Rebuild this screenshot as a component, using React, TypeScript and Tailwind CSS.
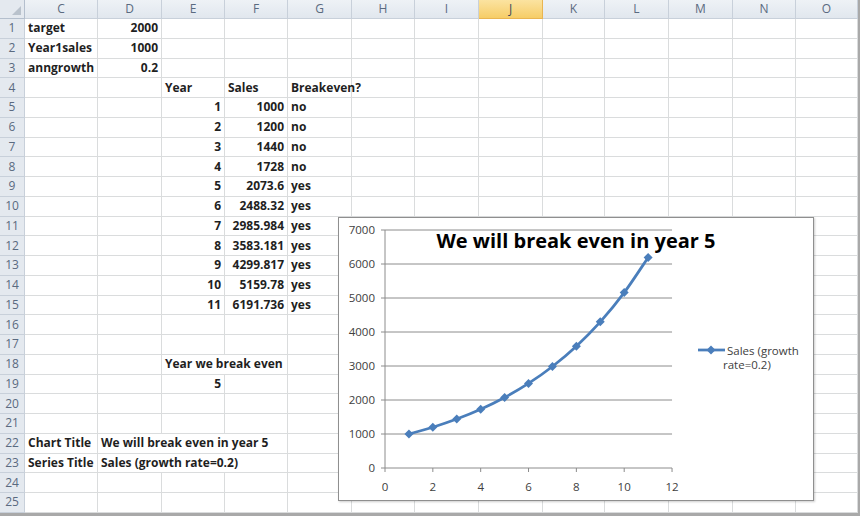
const COLS = ["C", "D", "E", "F", "G", "H", "I", "J", "K", "L", "M", "N", "O"];

type Cell = { t: string; r?: boolean; join?: boolean };

const cells: Record<string, Cell> = {
  C1: { t: "target" },
  D1: { t: "2000", r: true },
  C2: { t: "Year1sales" },
  D2: { t: "1000", r: true },
  C3: { t: "anngrowth" },
  D3: { t: "0.2", r: true },
  E4: { t: "Year" },
  F4: { t: "Sales" },
  G4: { t: "Breakeven?" },
  E18: { t: "Year we break even", join: true },
  E19: { t: "5", r: true },
  C22: { t: "Chart Title" },
  D22: { t: "We will break even in year 5", join: true },
  E22: { t: "", join: true },
  C23: { t: "Series Title" },
  D23: { t: "Sales (growth rate=0.2)", join: true },
  E23: { t: "", join: true },
};

const sales = [1000, 1200, 1440, 1728, 2073.6, 2488.32, 2985.984, 3583.181, 4299.817, 5159.78, 6191.736];
sales.forEach((v, i) => {
  const row = i + 5;
  cells["E" + row] = { t: String(i + 1), r: true };
  cells["F" + row] = { t: String(v), r: true };
  cells["G" + row] = { t: v >= 2000 ? "yes" : "no" };
});

// chart geometry (relative to inside of chart border)
const X0 = 46;
const XU = 23.92;
const Y0 = 250;
const YU = 0.034;
const pts = sales.map((v, i) => [X0 + (i + 1) * XU, Y0 - v * YU]);

function smoothPath(p: number[][]) {
  let d = `M${p[0][0]},${p[0][1]}`;
  for (let i = 0; i < p.length - 1; i++) {
    const a = p[i - 1] || p[i];
    const b = p[i];
    const c = p[i + 1];
    const e = p[i + 2] || c;
    const c1x = b[0] + (c[0] - a[0]) / 6;
    const c1y = b[1] + (c[1] - a[1]) / 6;
    const c2x = c[0] - (e[0] - b[0]) / 6;
    const c2y = c[1] - (e[1] - b[1]) / 6;
    d += ` C${c1x},${c1y} ${c2x},${c2y} ${c[0]},${c[1]}`;
  }
  return d;
}

function Diamond({ x, y }: { x: number; y: number }) {
  return <polygon points={`${x},${y - 4.5} ${x + 4.5},${y} ${x},${y + 4.5} ${x - 4.5},${y}`} fill="#4a7ebb" />;
}

function Chart() {
  const grid = [1, 2, 3, 4, 5, 6, 7];
  return (
    <div className="absolute left-[338px] top-[217px] h-[284px] w-[476px] border border-[#8f8f8f] bg-white shadow-[1px_1px_2px_rgba(0,0,0,0.2)]">
      <svg width="474" height="282" className="block" style={{ fontFamily: "'Open Sans', Lato, sans-serif" }}>
        {grid.map((k) => (
          <line key={k} x1={X0} x2={X0 + 12 * XU} y1={Y0 - k * 34} y2={Y0 - k * 34} stroke="#8c8c8c" strokeWidth="1" />
        ))}
        {[0, ...grid].map((k) => (
          <g key={"y" + k}>
            <line x1={X0 - 4} x2={X0} y1={Y0 - k * 34} y2={Y0 - k * 34} stroke="#8c8c8c" />
            <text x={36} y={Y0 - k * 34 + 4} fontSize="11.5" fill="#404040" textAnchor="end">
              {k * 1000}
            </text>
          </g>
        ))}
        <line x1={X0} x2={X0} y1={12} y2={Y0} stroke="#8c8c8c" />
        <line x1={X0} x2={X0 + 12 * XU} y1={Y0} y2={Y0} stroke="#8c8c8c" />
        {[0, 2, 4, 6, 8, 10, 12].map((n) => (
          <g key={"x" + n}>
            <line x1={X0 + n * XU} x2={X0 + n * XU} y1={Y0} y2={Y0 + 4} stroke="#8c8c8c" />
            <text x={X0 + n * XU} y={Y0 + 23} fontSize="11.5" fill="#404040" textAnchor="middle">
              {n}
            </text>
          </g>
        ))}
        <path d={smoothPath(pts)} fill="none" stroke="#4a7ebb" strokeWidth="2.75" />
        {pts.map(([x, y], i) => (
          <Diamond key={i} x={x} y={y} />
        ))}
        <text x={237} y={30} fontSize="20" fontWeight="700" fill="#000" textAnchor="middle">
          We will break even in year 5
        </text>
        <line x1={359} x2={386} y1={132} y2={132} stroke="#4a7ebb" strokeWidth="2.75" />
        <Diamond x={372} y={132} />
        <text x={388} y={137} fontSize="11.5" fill="#404040">
          Sales (growth
        </text>
        <text x={384} y={151} fontSize="11.5" fill="#404040">
          rate=0.2)
        </text>
      </svg>
    </div>
  );
}

export default function App() {
  const rows = Array.from({ length: 25 }, (_, i) => i + 1);
  return (
    <div className="relative h-[516px] w-[860px] overflow-hidden bg-white font-['Open_Sans','Lato',sans-serif]">
      <div className="grid w-[860px] grid-cols-[25px_73px_64px_63px_63px_64px_63px_64px_64px_62px_64px_64px_63px_62px_2px] grid-rows-[19px_repeat(25,19.75px)]">
        {/* header */}
        <div className="relative border-r border-b border-[#b4bfcd] bg-[#e4e9ef]">
          <div className="absolute bottom-[3px] right-[3px] h-0 w-0 border-b-[9px] border-l-[9px] border-b-[#b9c2cc] border-l-transparent" />
        </div>
        {COLS.map((c) =>
          c === "J" ? (
            <div key={c} className="flex items-center justify-center border-r border-b border-[#e9b551] bg-gradient-to-b from-[#fbe3a0] to-[#f6cd66] text-[12px] text-[#3d4a5c]">
              {c}
            </div>
          ) : (
            <div key={c} className="flex items-center justify-center border-r border-b border-[#c8d0da] bg-gradient-to-b from-[#eef2f6] to-[#e1e7ee] text-[12px] text-[#5a6a80]">
              {c}
            </div>
          )
        )}
        <div className="bg-[#a9a9a9]" />
        {rows.map((r) => (
          <div key={r} className="contents">
            <div className="flex items-center justify-center border-r border-b border-[#c8d0da] bg-[#e4e9ef] text-[12px] text-[#5a6a80]">
              {r}
            </div>
            {COLS.map((c) => {
              const cell = cells[c + r];
              return (
                <div
                  key={c}
                  className={
                    "flex min-w-0 items-center whitespace-nowrap border-b border-[#dadcdd] text-[12px] font-bold text-[#1f1f1f] " +
                    (cell?.join ? "" : "border-r ") +
                    (cell?.r ? "justify-end pr-[3px]" : "pl-[3px]")
                  }
                >
                  {cell?.t}
                </div>
              );
            })}
            <div className="bg-[#a9a9a9]" />
          </div>
        ))}
      </div>
      <div className="h-[4px] w-[860px] bg-[#a9a9a9]" />
      <Chart />
    </div>
  );
}
